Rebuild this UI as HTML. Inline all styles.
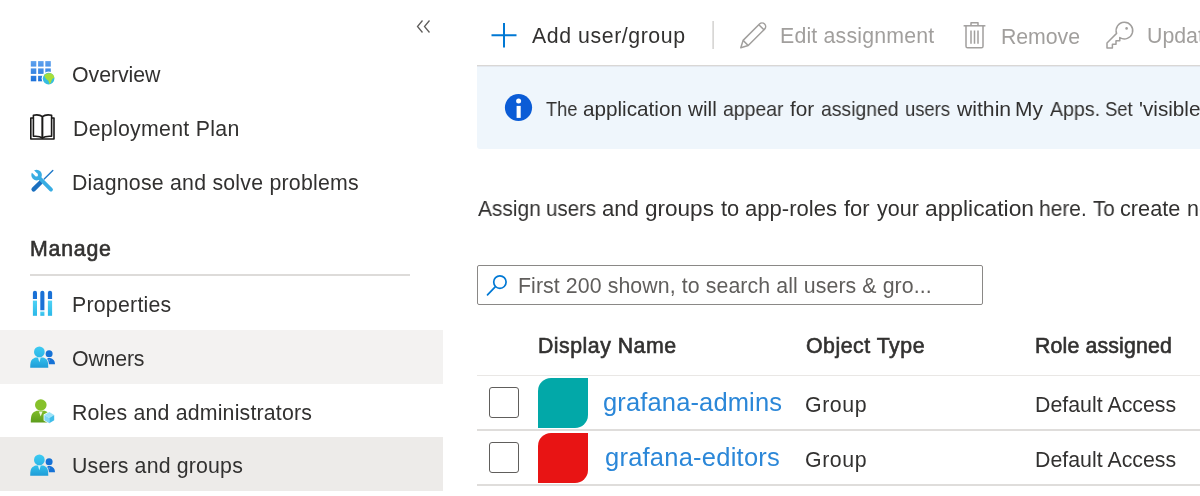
<!DOCTYPE html>
<html><head><meta charset="utf-8">
<style>
html,body{margin:0;padding:0;width:1200px;height:496px;overflow:hidden;background:#fff;}
body{position:relative;font-family:"Liberation Sans",sans-serif;color:#323130;}
.t{position:absolute;white-space:nowrap;line-height:1;font-size:21.3px;will-change:transform;}
.a{position:absolute;}
svg{position:absolute;overflow:visible;}
</style></head><body>
<!-- sidebar selected rows -->
<div class="a" style="left:0;top:330px;width:443px;height:54px;background:#f3f2f1"></div>
<div class="a" style="left:0;top:437px;width:443px;height:54px;background:#edebe9"></div>
<div class="a" style="left:30px;top:274px;width:380px;height:2px;background:#dddbd9"></div>

<!-- collapse chevrons -->
<svg style="left:0;top:0" width="1200" height="496">
  <path d="M422.5,20.5 L417.5,26.5 L422.5,32.5 M429.5,20.5 L424.5,26.5 L429.5,32.5" fill="none" stroke="#605e5c" stroke-width="1.3"/>
</svg>

<!-- sidebar icons -->
<svg style="left:0;top:0" width="460" height="496">
  <defs>
    <linearGradient id="gb" gradientUnits="userSpaceOnUse" x1="0" y1="61" x2="0" y2="82">
      <stop offset="0" stop-color="#5fa2ee"/><stop offset="1" stop-color="#1a6fd9"/>
    </linearGradient>
    <linearGradient id="pc" x1="0" y1="0" x2="0" y2="1">
      <stop offset="0" stop-color="#4fd2f5"/><stop offset="1" stop-color="#2bb8e8"/>
    </linearGradient>
    <linearGradient id="pb" x1="0" y1="0" x2="0" y2="1">
      <stop offset="0" stop-color="#32c0ec"/><stop offset="1" stop-color="#1f9cd7"/>
    </linearGradient>
    <linearGradient id="ph" x1="0" y1="0" x2="0" y2="1">
      <stop offset="0" stop-color="#3ccbf2"/><stop offset="1" stop-color="#2db5e6"/>
    </linearGradient>
    <linearGradient id="gr" x1="0" y1="0" x2="0" y2="1">
      <stop offset="0" stop-color="#80bd2a"/><stop offset="1" stop-color="#5c9c1c"/>
    </linearGradient>
  </defs>
  <!-- overview grid -->
  <g fill="url(#gb)">
    <rect x="30.8" y="61.1" width="5.5" height="5.5"/><rect x="38.1" y="61.1" width="5.5" height="5.5"/><rect x="45.3" y="61.1" width="5.5" height="5.5"/>
    <rect x="30.8" y="68.4" width="5.5" height="5.5"/><rect x="38.1" y="68.4" width="5.5" height="5.5"/><rect x="45.3" y="68.4" width="5.5" height="5.5"/>
    <rect x="30.8" y="75.8" width="5.5" height="5.5"/><rect x="38.1" y="75.8" width="5.5" height="5.5"/>
  </g>
  <circle cx="48.6" cy="78.6" r="7" fill="#fff"/>
  <circle cx="48.6" cy="78.6" r="5.8" fill="#35bde0"/>
  <path d="M44.2,75.2 C46,73.5 49,73 51.5,73.6 C53.5,74.6 54.4,76.5 54.3,78 C53,78.4 52,79 51.6,80.5 C51.2,82 50.5,83.5 49.6,84.2 C49,82.5 48.8,81 47.6,80 C46.5,79.2 45,78.3 44.2,75.2 Z" fill="#a6de3a"/>
  <!-- book -->
  <g fill="none" stroke="#1b1a19" stroke-width="1.6" stroke-linejoin="round">
    <path d="M33.4,118 H30.8 V139 H54 V118 H51.6"/>
    <path d="M33.4,115.2 C37,114.6 40.5,115 42.4,116.6 V138 C40.5,136.5 37,136 33.4,136.3 Z"/>
    <path d="M51.6,115.2 C48,114.6 44.3,115 42.4,116.6 V138 C44.3,136.5 48,136 51.6,136.3 Z"/>
  </g>
  <!-- wrench & screwdriver -->
  <mask id="wm" maskUnits="userSpaceOnUse" x="0" y="150" width="80" height="60">
    <rect x="0" y="150" width="80" height="60" fill="#fff"/>
    <rect x="-1.6" y="-9" width="3.2" height="9" fill="#000" transform="translate(36.4,174.9) rotate(-45)"/>
    <circle cx="36.4" cy="174.9" r="1.6" fill="#000"/>
  </mask>
  <path d="M44.2,179 L52.8,170.6" stroke="#1f79c9" stroke-width="1.4" stroke-linecap="round"/>
  <path d="M33.6,189.4 L40.8,182.2" stroke="#1a6fbf" stroke-width="4.4" stroke-linecap="round"/>
  <g mask="url(#wm)" fill="#38ade3">
    <circle cx="36.6" cy="175.1" r="5.3"/>
    <path d="M38,176.5 L51,189.6" stroke="#38ade3" stroke-width="3.8" stroke-linecap="round"/>
  </g>
  <!-- properties -->
  <g>
    <path d="M32.9,299 V292.8 A2,2 0 0 1 37,292.8 V299 Z" fill="#1a71d6"/>
    <rect x="32.9" y="300.6" width="4.1" height="15.2" fill="url(#pc)"/>
    <path d="M40.3,310.3 V292.8 A2,2 0 0 1 44.4,292.8 V310.3 Z" fill="#1a71d6"/>
    <rect x="40.3" y="311.6" width="4.1" height="4.2" fill="url(#pc)"/>
    <path d="M47.9,299 V292.8 A2,2 0 0 1 52.1,292.8 V299 Z" fill="#1a71d6"/>
    <rect x="47.9" y="300.6" width="4.2" height="15.2" fill="url(#pc)"/>
  </g>
  <!-- owners -->
  <g transform="translate(0,0)">
    <circle cx="49.1" cy="353.8" r="3.5" fill="#1572d6"/>
    <path d="M45.2,364.2 C45.2,360.2 46.8,358 49.1,358 C51.6,358 55,359.8 55,364.2 Z" fill="#1572d6"/>
    <path d="M48.3,359.4 L49.1,361.4 L49.9,359.4 Z" fill="#7fb3ea"/>
    <path d="M29.4,368.4 C29.4,363 30,360.3 32,358.6 C33.5,357.2 35,356.6 36.8,356.6 H42 C43.8,356.6 45.3,357.2 46.7,358.6 C48.6,360.4 49.1,363 49.1,368.4 Z" fill="#f3f2f1"/>
    <circle cx="39.35" cy="351.9" r="6.1" fill="#f3f2f1"/>
    <circle cx="39.35" cy="351.9" r="5.35" fill="url(#ph)"/>
    <path d="M30.2,367.8 C30.2,363 30.8,360.6 32.6,359.1 C34,357.8 35.4,357.4 37,357.4 H41.8 C43.4,357.4 44.9,357.8 46.2,359.1 C47.9,360.7 48.3,363 48.3,367.8 Z" fill="url(#pb)"/>
    <path d="M37.9,357.6 L39.35,362.2 L40.8,357.6 Z" fill="#d9f1fb"/>
  </g>
  <g transform="translate(0,108)">
    <circle cx="49.1" cy="353.8" r="3.5" fill="#1572d6"/>
    <path d="M45.2,364.2 C45.2,360.2 46.8,358 49.1,358 C51.6,358 55,359.8 55,364.2 Z" fill="#1572d6"/>
    <path d="M48.3,359.4 L49.1,361.4 L49.9,359.4 Z" fill="#7fb3ea"/>
    <path d="M29.4,368.4 C29.4,363 30,360.3 32,358.6 C33.5,357.2 35,356.6 36.8,356.6 H42 C43.8,356.6 45.3,357.2 46.7,358.6 C48.6,360.4 49.1,363 49.1,368.4 Z" fill="#edebe9"/>
    <circle cx="39.35" cy="351.9" r="6.1" fill="#edebe9"/>
    <circle cx="39.35" cy="351.9" r="5.35" fill="url(#ph)"/>
    <path d="M30.2,367.8 C30.2,363 30.8,360.6 32.6,359.1 C34,357.8 35.4,357.4 37,357.4 H41.8 C43.4,357.4 44.9,357.8 46.2,359.1 C47.9,360.7 48.3,363 48.3,367.8 Z" fill="url(#pb)"/>
    <path d="M37.9,357.6 L39.35,362.2 L40.8,357.6 Z" fill="#d9f1fb"/>
  </g>
  <!-- roles -->
  <circle cx="40.8" cy="405" r="5.8" fill="#86c12b"/>
  <path d="M30.8,422.6 C30.8,417 31.4,414.2 33.3,412.5 C34.8,411.2 36.3,410.7 38,410.7 H43.4 C45.1,410.7 46.6,411.2 48,412.5 C49.9,414.2 50.4,417 50.4,422.6 Z" fill="url(#gr)"/>
  <path d="M38.8,411.6 L40.7,416.6 L42.6,411.6 Z" fill="#eef7e0"/>
  <g>
    <path d="M43.6,414.6 L49.3,411.2 L55,414.6 V420.6 L49.3,424 L43.6,420.6 Z" fill="#fff"/>
    <path d="M44.4,415 L49.3,412 L54.2,415 L49.3,418 Z" fill="#9ce3f8"/>
    <path d="M44.4,415 L49.3,418 V423.2 L44.4,420.2 Z" fill="#7fd6f4"/>
    <path d="M54.2,415 L49.3,418 V423.2 L54.2,420.2 Z" fill="#3fbde9"/>
  </g>
</svg>

<!-- sidebar texts -->
<div class="t" style="left:72.0px;top:65px;font-size:21.3px;letter-spacing:-0.043px;">Overview</div>
<div class="t" style="left:72.8px;top:119px;font-size:21.3px;letter-spacing:0.293px;">Deployment Plan</div>
<div class="t" style="left:72.1px;top:173px;font-size:21.3px;letter-spacing:0.235px;">Diagnose and solve problems</div>
<div class="t" style="left:30.3px;top:239px;font-size:21.3px;letter-spacing:0.780px;-webkit-text-stroke:0.6px #323130;">Manage</div>
<div class="t" style="left:71.9px;top:295px;font-size:21.3px;letter-spacing:0.244px;">Properties</div>
<div class="t" style="left:71.9px;top:349px;font-size:21.3px;letter-spacing:-0.180px;">Owners</div>
<div class="t" style="left:72.0px;top:403px;font-size:21.3px;letter-spacing:0.187px;">Roles and administrators</div>
<div class="t" style="left:71.8px;top:456px;font-size:21.3px;letter-spacing:0.180px;">Users and groups</div>

<!-- toolbar -->
<svg style="left:0;top:0" width="1200" height="496">
  <path d="M504,23 V47.5 M491.5,35.2 H516.5" stroke="#0078d4" stroke-width="2" fill="none"/>
  <rect x="712.5" y="21" width="1.2" height="28" fill="#c8c6c4"/>
  <g fill="none" stroke="#a19f9d" stroke-width="1.5" stroke-linejoin="round">
    <path d="M740.8,47.8 L743.1,40.4 L759.5,24 A3.6,3.6 0 0 1 764.6,29.1 L748.2,45.5 Z"/>
    <path d="M743.1,40.4 L748.2,45.5 M758.8,24.7 L763.9,29.8"/>
  </g>
  <g fill="none" stroke="#a19f9d" stroke-width="1.5" stroke-linejoin="round">
    <path d="M963.6,25.8 H985.4"/>
    <path d="M971,25.6 V22.8 H978 V25.6"/>
    <path d="M966,25.8 V46.2 A1.6,1.6 0 0 0 967.6,47.8 H981.4 A1.6,1.6 0 0 0 983,46.2 V25.8"/>
    <path d="M971,30.5 V43.8 M974.5,30.5 V43.8 M978,30.5 V43.8"/>
  </g>
  <g fill="none" stroke="#a19f9d" stroke-width="1.5" stroke-linejoin="round">
    <path d="M1116.6,33.4 A8.3,8.3 0 1 1 1119.8,37.5 V40.8 H1116 V44.2 H1112.4 V47.9 H1107 V43 Z"/>
  </g>
  <circle cx="1126.6" cy="28.4" r="1.3" fill="#a19f9d"/>
</svg>
<div class="t" style="left:531.6px;top:26px;font-size:21.3px;letter-spacing:0.569px;">Add user/group</div>
<div class="t" style="left:780.4px;top:26px;font-size:21.3px;letter-spacing:0.186px;color:#a19f9d;">Edit assignment</div>
<div class="t" style="left:1001.0px;top:27px;font-size:21.3px;letter-spacing:-0.050px;color:#a19f9d;">Remove</div>
<div class="t" style="left:1147px;top:26px;color:#a19f9d">Update Credentials</div>

<!-- info bar -->
<div class="a" style="left:477px;top:65px;width:723px;height:1px;background:#d9d7d5"></div>
<div class="a" style="left:477px;top:66px;width:723px;height:1px;background:#e3e8ef;z-index:1"></div>
<div class="a" style="left:477px;top:66px;width:740px;height:83px;background:#eff6fc;border-radius:0 0 3px 3px"></div>
<svg style="left:0;top:0" width="1200" height="496">
  <circle cx="518.5" cy="107.5" r="13.6" fill="#0b5cd6"/>
  <circle cx="518.6" cy="101" r="2.5" fill="#fff"/>
  <rect x="516.6" y="105.9" width="4.1" height="12" fill="#fff"/>
</svg>
<!--INFO-->
<div class="t" style="left:546.00px;top:99.40px;font-size:20.7px;transform:scaleX(0.8771);transform-origin:0 0">The</div>
<div class="t" style="left:583.20px;top:99.40px;font-size:20.7px;transform:scaleX(0.9959);transform-origin:0 0">application</div>
<div class="t" style="left:688.30px;top:99.40px;font-size:20.7px;transform:scaleX(0.9982);transform-origin:0 0">will</div>
<div class="t" style="left:722.81px;top:99.40px;font-size:20.7px;transform:scaleX(0.9389);transform-origin:0 0">appear</div>
<div class="t" style="left:790.40px;top:99.40px;font-size:20.7px;transform:scaleX(1.0042);transform-origin:0 0">for</div>
<div class="t" style="left:821.06px;top:99.40px;font-size:20.7px;transform:scaleX(0.9370);transform-origin:0 0">assigned</div>
<div class="t" style="left:904.51px;top:99.40px;font-size:20.7px;transform:scaleX(0.8898);transform-origin:0 0">users</div>
<div class="t" style="left:956.50px;top:99.40px;font-size:20.7px;transform:scaleX(1.0231);transform-origin:0 0">within</div>
<div class="t" style="left:1015.18px;top:99.40px;font-size:20.7px;transform:scaleX(1.0120);transform-origin:0 0">My</div>
<div class="t" style="left:1050.00px;top:99.40px;font-size:20.7px;transform:scaleX(0.9471);transform-origin:0 0">Apps.</div>
<div class="t" style="left:1104.91px;top:99.40px;font-size:20.7px;transform:scaleX(0.8900);transform-origin:0 0">Set</div>
<div class="t" style="left:1139.00px;top:99.40px;font-size:20.7px;transform:scaleX(1.0000);transform-origin:0 0">'visible</div>

<!--ASSIGN-->
<div class="t" style="left:477.90px;top:199.40px;font-size:21.5px;transform:scaleX(0.9746);transform-origin:0 0">Assign</div>
<div class="t" style="left:546.05px;top:199.40px;font-size:21.5px;transform:scaleX(0.9529);transform-origin:0 0">users</div>
<div class="t" style="left:602.27px;top:199.40px;font-size:21.5px;transform:scaleX(1.0294);transform-origin:0 0">and</div>
<div class="t" style="left:644.95px;top:199.40px;font-size:21.5px;transform:scaleX(1.0484);transform-origin:0 0">groups</div>
<div class="t" style="left:720.80px;top:199.40px;font-size:21.5px;transform:scaleX(1.0176);transform-origin:0 0">to</div>
<div class="t" style="left:744.77px;top:199.40px;font-size:21.5px;transform:scaleX(1.0256);transform-origin:0 0">app-roles</div>
<div class="t" style="left:843.75px;top:199.40px;font-size:21.5px;transform:scaleX(1.0220);transform-origin:0 0">for</div>
<div class="t" style="left:877.00px;top:199.40px;font-size:21.5px;transform:scaleX(0.9893);transform-origin:0 0">your</div>
<div class="t" style="left:925.19px;top:199.40px;font-size:21.5px;transform:scaleX(1.0605);transform-origin:0 0">application</div>
<div class="t" style="left:1039.03px;top:199.40px;font-size:21.5px;transform:scaleX(0.9739);transform-origin:0 0">here.</div>
<div class="t" style="left:1092.50px;top:199.40px;font-size:21.5px;transform:scaleX(0.9568);transform-origin:0 0">To</div>
<div class="t" style="left:1120.24px;top:199.40px;font-size:21.5px;transform:scaleX(1.0095);transform-origin:0 0">create</div>
<div class="t" style="left:1186.50px;top:199.40px;font-size:21.5px;transform:scaleX(1.0000);transform-origin:0 0">new</div>

<!-- search -->
<div class="a" style="left:477px;top:265px;width:504px;height:38px;border:1px solid #8a8886;border-radius:2px"></div>
<svg style="left:0;top:0" width="1200" height="496">
  <circle cx="499.9" cy="282.1" r="6.2" stroke="#0078d4" stroke-width="1.7" fill="none"/>
  <path d="M495.2,286.8 L487.5,294.8" stroke="#0078d4" stroke-width="1.7" stroke-linecap="round"/>
</svg>
<div class="t" style="left:517.6px;top:276px;font-size:21.3px;letter-spacing:0.093px;color:#605e5c;">First 200 shown, to search all users &amp; gro...</div>

<!-- table header -->
<div class="t" style="left:537.8px;top:336px;font-size:21.3px;letter-spacing:0.495px;-webkit-text-stroke:0.6px #323130;">Display Name</div>
<div class="t" style="left:806.2px;top:336px;font-size:21.3px;letter-spacing:0.525px;-webkit-text-stroke:0.6px #323130;">Object Type</div>
<div class="t" style="left:1035.2px;top:336px;font-size:21.3px;letter-spacing:0.150px;-webkit-text-stroke:0.6px #323130;">Role assigned</div>
<div class="a" style="left:477px;top:375px;width:723px;height:1px;background:#e9e7e5"></div>
<div class="a" style="left:477px;top:429px;width:723px;height:2px;background:#dfdddb"></div>
<div class="a" style="left:477px;top:484px;width:723px;height:2px;background:#dfdddb"></div>

<!-- rows -->
<div class="a" style="left:488.5px;top:387px;width:28px;height:28.5px;border:1.5px solid #605e5c;border-radius:3px"></div>
<div class="a" style="left:488.5px;top:442px;width:28px;height:28.5px;border:1.5px solid #605e5c;border-radius:3px"></div>
<div class="a" style="left:538px;top:377.5px;width:50px;height:50px;background:#02a8a8;border-radius:13px 0 13px 0"></div>
<div class="a" style="left:538px;top:432.5px;width:50px;height:50px;background:#e81414;border-radius:13px 0 13px 0"></div>
<div class="t" style="left:603.0px;top:390px;font-size:25.5px;letter-spacing:0.138px;color:#2b87d8;">grafana-admins</div>
<div class="t" style="left:604.8px;top:445px;font-size:25.5px;letter-spacing:0.232px;color:#2b87d8;">grafana-editors</div>
<div class="t" style="left:805.4px;top:395.3px;letter-spacing:0.6px">Group</div>
<div class="t" style="left:805.4px;top:450px;letter-spacing:0.6px">Group</div>
<div class="t" style="left:1035.2px;top:395.3px;letter-spacing:0.023px">Default Access</div>
<div class="t" style="left:1035.2px;top:450px;letter-spacing:0.023px">Default Access</div>

</body></html>
